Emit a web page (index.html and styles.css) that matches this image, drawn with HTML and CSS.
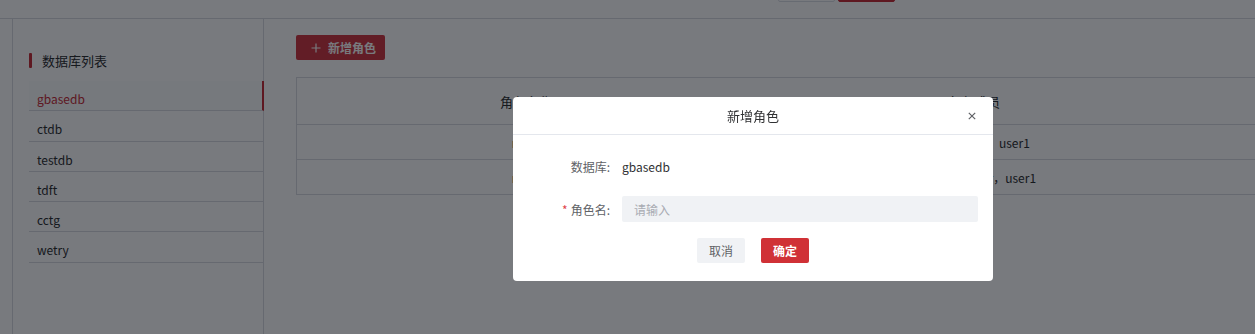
FILE: index.html
```html
<!DOCTYPE html>
<html lang="zh-CN">
  <head>
    <meta charset="UTF-8" />
    <meta name="viewport" content="width=device-width, initial-scale=1.0" />
    <title>角色管理</title>
    <link rel="stylesheet" href="styles.css">
  </head>
  <body>
    <header class="topbar">
      <div class="top-actions">
        <button class="top-btn"></button>
        <button class="top-btn top-btn-red"></button>
      </div>
    </header>
    <div class="layout">
      <aside class="sidebar">
        <h3 class="side-title">数据库列表</h3>
        <ul class="db-list">
          <li class="db-item active">gbasedb</li>
          <li class="db-item">ctdb</li>
          <li class="db-item">testdb</li>
          <li class="db-item">tdft</li>
          <li class="db-item">cctg</li>
          <li class="db-item">wetry</li>
        </ul>
      </aside>
      <main class="content">
        <button class="add-button">
          <svg class="plus" viewBox="0 0 10 10" width="10" height="10">
            <path d="M5 0.5V9.5M0.5 5H9.5" stroke="currentColor" stroke-width="1.2" fill="none" />
          </svg>
          新增角色
        </button>
        <table class="role-table">
          <thead>
            <tr>
              <th class="col-name">角色名称</th>
              <th class="col-member">角色成员</th>
              <th></th>
            </tr>
          </thead>
          <tbody>
            <tr>
              <td class="role-name">role1</td>
              <td>admin，test，user1</td>
              <td></td>
            </tr>
            <tr>
              <td class="role-name">role2</td>
              <td>user，testuser，user1</td>
              <td></td>
            </tr>
          </tbody>
        </table>
      </main>
    </div>

    <div class="mask"></div>
    <div class="dialog">
      <div class="dialog-header">
        <span class="dialog-title">新增角色</span>
        <svg class="dialog-close" viewBox="0 0 8 8" width="8" height="8">
          <path d="M0.8 0.8L7.2 7.2M7.2 0.8L0.8 7.2" stroke="currentColor" stroke-width="1.2" fill="none" />
        </svg>
      </div>
      <form class="dialog-body">
        <div class="form-row">
          <label class="form-label">数据库:</label>
          <span class="form-value">gbasedb</span>
        </div>
        <div class="form-row">
          <label class="form-label" for="role-name"><i class="required">*</i>角色名:</label>
          <input id="role-name" class="form-input" type="text" placeholder="请输入" />
        </div>
        <div class="dialog-footer">
          <button type="button" class="btn btn-cancel">取消</button>
          <button type="submit" class="btn btn-ok">确定</button>
        </div>
      </form>
    </div>
  </body>
</html>
```

FILE: styles.css
```css
body {
  margin: 0;
  padding: 0;
  font-family: "Noto Sans CJK SC", "Noto Sans", sans-serif;
  background: #fff;
  color: #303133;
  overflow: hidden;
}

.topbar {
  display: flow-root;
  height: 18px;
  border-bottom: 1px solid #d8dbe2;
}

.top-actions {
  display: flex;
  gap: 3px;
  margin-left: 778px;
  margin-top: -25px;
}

.top-btn {
  width: 57px;
  height: 27px;
  border: 1px solid #dcdfe6;
  border-radius: 2px;
  background: #fff;
}

.top-btn-red {
  background: #c8303a;
  border-color: #c8303a;
}

.layout {
  display: flex;
  height: 315px;
}

.sidebar {
  box-sizing: border-box;
  width: 252px;
  margin-left: 12px;
  padding: 32px 0 0 16px;
  border-left: 1px solid #d8dbe2;
  border-right: 1px solid #d8dbe2;
}

.side-title {
  display: flex;
  align-items: center;
  gap: 10px;
  margin: 0;
  height: 18px;
  font-size: 13px;
  font-weight: normal;
  color: #303133;
}

.side-title::before {
  content: "";
  width: 3px;
  height: 15px;
  border-radius: 1px;
  background: #c8303a;
}

.db-list {
  list-style: none;
  margin: 12px 0 0;
  padding: 0;
}

.db-item {
  box-sizing: border-box;
  height: 30.3px;
  padding: 6px 0 0 8px;
  line-height: 24px;
  font-size: 12px;
  color: #303133;
  border-bottom: 1px solid #d8dbe2;
}

.db-item.active {
  color: #c8303a;
  background: #fbfcfd;
  border-right: 2px solid #c8303a;
  margin-right: -1px;
}

.content {
  flex: 1;
  padding: 16px 0 0 32px;
  overflow: hidden;
}

.add-button {
  display: flex;
  align-items: center;
  gap: 7px;
  height: 25px;
  width: 89px;
  padding: 0 0 0 15px;
  border: none;
  border-radius: 2px;
  background: #d03a44;
  color: #fff;
  font-family: inherit;
  font-size: 12px;
  font-weight: bold;
}

.role-table {
  width: 1000px;
  margin-top: 17px;
  border-collapse: collapse;
  border: 1px solid #d8dbe2;
  font-size: 12px;
}

.role-table th,
.role-table td {
  padding: 0;
  border-bottom: 1px solid #d8dbe2;
  color: #303133;
}

.role-table th {
  height: 46px;
  font-weight: normal;
  font-size: 13px;
}

.role-table td {
  height: 34px;
  text-align: center;
}

.col-name {
  width: 458px;
}

.col-member {
  width: 438px;
}

.role-name {
  color: #1d5fb8;
}

.mask {
  position: fixed;
  inset: 0;
  background: rgba(0, 4, 12, 0.53);
}

.dialog {
  position: fixed;
  left: 513px;
  top: 97px;
  width: 480px;
  background: #fff;
  border-radius: 4px;
}

.dialog-header {
  position: relative;
  display: flex;
  align-items: center;
  justify-content: center;
  height: 37px;
  border-bottom: 1px solid #e4e7ed;
}

.dialog-title {
  font-size: 13px;
  color: #303133;
}

.dialog-close {
  position: absolute;
  right: 17px;
  top: 15px;
  color: #606266;
}

.dialog-body {
  padding: 18px 15px 18px 0;
}

.form-row {
  display: flex;
  align-items: center;
  height: 26px;
  margin-bottom: 17px;
}

.form-row + .form-row {
  margin-bottom: 16px;
}

.form-label {
  width: 97px;
  margin-right: 12px;
  text-align: right;
  font-size: 12px;
  color: #606266;
}

.required {
  font-style: normal;
  color: #e0454b;
  margin-right: 3px;
}

.form-value {
  font-size: 12px;
  color: #303133;
}

.form-input {
  flex: 1;
  height: 26px;
  box-sizing: border-box;
  padding: 0 12px;
  border: none;
  border-radius: 2px;
  background: #f0f2f5;
  font-family: inherit;
  font-size: 12px;
  outline: none;
}

.form-input::placeholder {
  color: #a8abb2;
}

.dialog-footer {
  display: flex;
  justify-content: center;
  gap: 16px;
  padding-left: 15px;
}

.btn {
  width: 48px;
  height: 25px;
  border: none;
  border-radius: 2px;
  font-family: inherit;
  font-size: 12px;
}

.btn-cancel {
  background: #f0f2f5;
  color: #606266;
}

.btn-ok {
  background: #d03136;
  color: #fff;
  font-weight: bold;
}
```
